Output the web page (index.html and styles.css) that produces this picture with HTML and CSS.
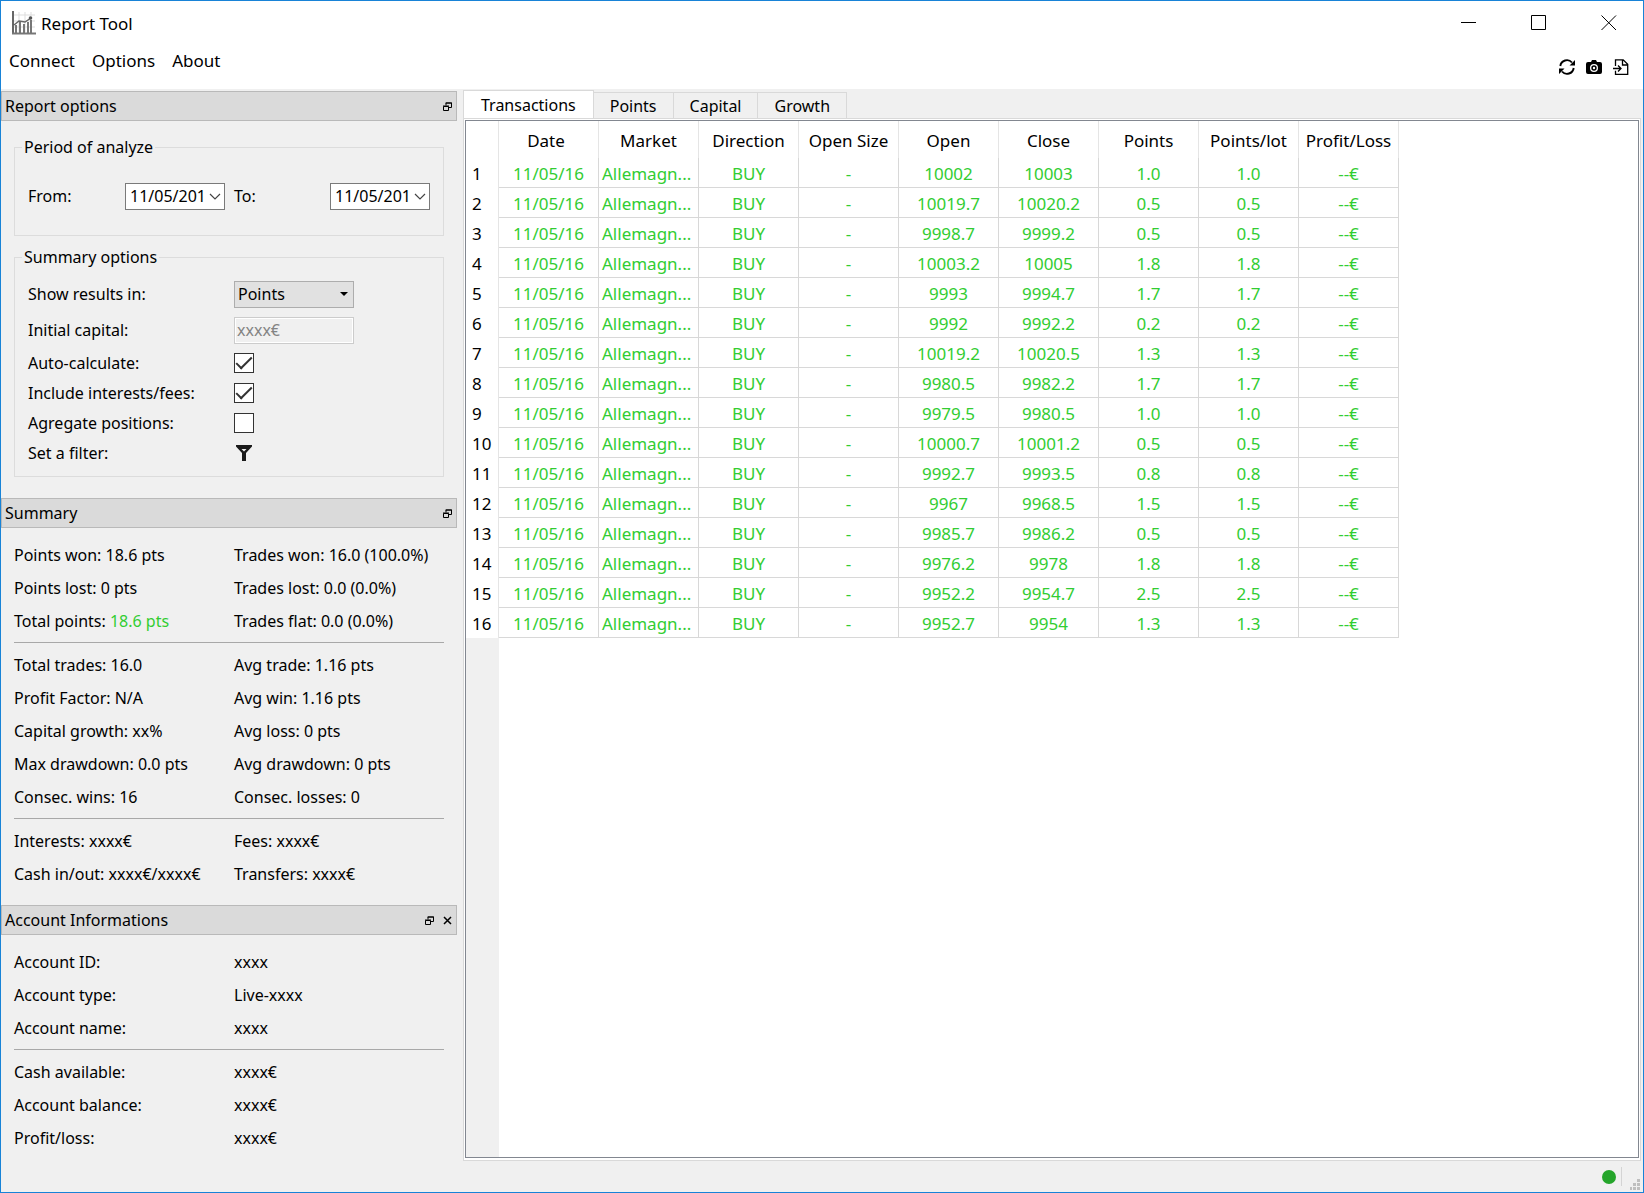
FILE: index.html
```html
<!DOCTYPE html>
<html lang="en">
<head>
<meta charset="utf-8">
<title>Report Tool</title>
<link rel="stylesheet" href="styles.css">
</head>
<body>
<svg class="sprite" aria-hidden="true">
  <symbol id="float" viewBox="0 0 9 9"><path d="M3 3.500V1h5.500v4.500H6M2.500 1h6.500M.5 4.500h5v4h-5zM0 4h6" fill="none" stroke="#000"/></symbol>
  <symbol id="chevron" viewBox="0 0 12 7"><path d="M1 1l5 5 5-5" fill="none" stroke="#444" stroke-width="1.200"/></symbol>
</svg>
<div class="window">
  <header class="top">
    <div class="titlebar">
      <svg class="logo" viewBox="0 0 24 24">
        <path d="M7 1v20M13 1v20M19 1v20M2 4h21M2 10h21M2 16h21" stroke="#ddd" fill="none"/>
        <path d="M4 22v-8M8 22V11M12 22v-9M16 22V11M19 22V9" stroke="#777" stroke-width="2"/>
        <path d="M2 14l5-4 6 1 6-4" stroke="#666" stroke-width="1.500" fill="none"/><circle cx="18.500" cy="7" r="1.800" fill="#555"/>
        <path d="M1 0v22" stroke="#333" stroke-width="1.500"/><path d="M0 22.500h24" stroke="#777" stroke-width="2"/>
      </svg>
      <h1>Report Tool</h1>
      <div class="winbuttons">
        <button aria-label="Minimize"><svg viewBox="0 0 16 16"><path d="M0 7.500h15" stroke="#000"/></svg></button>
        <button aria-label="Maximize"><svg viewBox="0 0 16 16"><path d="M.5.5h14v14H.5z" fill="none" stroke="#000"/></svg></button>
        <button aria-label="Close"><svg viewBox="0 0 16 16"><path d="M.5.5l14.500 14.500M15 .5L.5 15" stroke="#000"/></svg></button>
      </div>
    </div>
    <div class="menurow">
      <nav class="menu"><button>Connect</button><button>Options</button><button>About</button></nav>
      <div class="tools">
        <button aria-label="Refresh"><svg viewBox="0 0 16 16"><path d="M1.300 7A6.700 6.700 0 0 1 13 3.500M14.700 9A6.700 6.700 0 0 1 3 12.500" fill="none" stroke="#000" stroke-width="1.900"/><path d="M16 1v5.500h-5.500zM0 15V9.500h5.500z"/></svg></button>
        <button aria-label="Screenshot"><svg viewBox="0 0 16 16"><path fill-rule="evenodd" d="M2 3h3l1-2h4l1 2h3a2 2 0 0 1 2 2v8a2 2 0 0 1-2 2H2a2 2 0 0 1-2-2V5a2 2 0 0 1 2-2zM8 5a4 4 0 1 0 0 8 4 4 0 0 0 0-8z"/><circle cx="8" cy="9" r="2.700"/><circle cx="8" cy="9" r="1.200" fill="#fff"/></svg></button>
        <button aria-label="Export"><svg viewBox="0 0 16 16"><path d="M2.500 7V.8h7.700l4.500 4.500v10H2.500v-3.500M9.500 1v5h5M0 9.500h7.500M5 6.500l3 3-3 3" fill="none" stroke="#000" stroke-width="1.300"/></svg></button>
      </div>
    </div>
  </header>

  <div class="main">
    <aside class="docks">
      <section class="dock">
        <div class="dock-title"><h2>Report options</h2><button aria-label="Float"><svg><use href="#float"/></svg></button></div>
        <div class="options">
          <fieldset class="period">
            <legend>Period of analyze</legend>
            <label for="from">From:</label>
            <span class="date"><input id="from" type="text" value="11/05/201"><svg><use href="#chevron"/></svg></span>
            <label for="to">To:</label>
            <span class="date"><input id="to" type="text" value="11/05/201"><svg><use href="#chevron"/></svg></span>
          </fieldset>
          <fieldset class="summary-options">
            <legend>Summary options</legend>
            <div class="field tall"><label for="unit">Show results in:</label><span class="combo"><select id="unit"><option>Points</option><option>Percent</option></select><svg viewBox="0 0 8 4"><path d="M0 0h8L4 4z"/></svg></span></div>
            <div class="field tall"><label for="capital">Initial capital:</label><input id="capital" class="capital" type="text" value="xxxx€" disabled></div>
            <div class="field"><label for="auto">Auto-calculate:</label><input id="auto" type="checkbox" checked></div>
            <div class="field"><label for="fees">Include interests/fees:</label><input id="fees" type="checkbox" checked></div>
            <div class="field"><label for="agg">Agregate positions:</label><input id="agg" type="checkbox"></div>
            <div class="field"><label for="filter">Set a filter:</label><button id="filter" class="filter"><svg viewBox="0 0 16 16"><path fill-rule="evenodd" d="M0 0h16v1.500L10 8v8H6V8L0 1.500zM5.500 4L8 6.500 10.500 4z" fill="#1a1a1a"/></svg></button></div>
          </fieldset>
        </div>
      </section>

      <section class="dock">
        <div class="dock-title"><h2>Summary</h2><button aria-label="Float"><svg><use href="#float"/></svg></button></div>
        <div class="info">
          <div class="pairs">
            <span>Points won: 18.6 pts</span><span>Trades won: 16.0 (100.0%)</span>
            <span>Points lost: 0 pts</span><span>Trades lost: 0.0 (0.0%)</span>
            <span>Total points: <b>18.6 pts</b></span><span>Trades flat: 0.0 (0.0%)</span>
          </div>
          <hr>
          <div class="pairs">
            <span>Total trades: 16.0</span><span>Avg trade: 1.16 pts</span>
            <span>Profit Factor: N/A</span><span>Avg win: 1.16 pts</span>
            <span>Capital growth: xx%</span><span>Avg loss: 0 pts</span>
            <span>Max drawdown: 0.0 pts</span><span>Avg drawdown: 0 pts</span>
            <span>Consec. wins: 16</span><span>Consec. losses: 0</span>
          </div>
          <hr>
          <div class="pairs">
            <span>Interests: xxxx€</span><span>Fees: xxxx€</span>
            <span>Cash in/out: xxxx€/xxxx€</span><span>Transfers: xxxx€</span>
          </div>
        </div>
      </section>

      <section class="dock">
        <div class="dock-title"><h2>Account Informations</h2><button aria-label="Float"><svg><use href="#float"/></svg></button><button aria-label="Close"><svg viewBox="0 0 9 9"><path d="M1 1l7 7M8 1L1 8" stroke="#000" stroke-width="1.500"/></svg></button></div>
        <div class="info">
          <div class="pairs">
            <span>Account ID:</span><span>xxxx</span>
            <span>Account type:</span><span>Live-xxxx</span>
            <span>Account name:</span><span>xxxx</span>
          </div>
          <hr>
          <div class="pairs">
            <span>Cash available:</span><span>xxxx€</span>
            <span>Account balance:</span><span>xxxx€</span>
            <span>Profit/loss:</span><span>xxxx€</span>
          </div>
        </div>
      </section>
    </aside>

    <main class="content">
      <div class="tabs" role="tablist">
        <button role="tab" class="active" aria-selected="true">Transactions</button><button role="tab">Points</button><button role="tab">Capital</button><button role="tab">Growth</button>
      </div>
      <div class="pane">
        <div class="grid">
          <table>
            <colgroup><col class="num"><col span="9" class="data"></colgroup>
            <thead><tr><td></td><th>Date</th><th>Market</th><th>Direction</th><th>Open Size</th><th>Open</th><th>Close</th><th>Points</th><th>Points/lot</th><th>Profit/Loss</th></tr></thead>
            <tbody>
              <tr><th>1</th><td>11/05/16</td><td>Allemagn...</td><td>BUY</td><td>-</td><td>10002</td><td>10003</td><td>1.0</td><td>1.0</td><td>--€</td></tr>
              <tr><th>2</th><td>11/05/16</td><td>Allemagn...</td><td>BUY</td><td>-</td><td>10019.7</td><td>10020.2</td><td>0.5</td><td>0.5</td><td>--€</td></tr>
              <tr><th>3</th><td>11/05/16</td><td>Allemagn...</td><td>BUY</td><td>-</td><td>9998.7</td><td>9999.2</td><td>0.5</td><td>0.5</td><td>--€</td></tr>
              <tr><th>4</th><td>11/05/16</td><td>Allemagn...</td><td>BUY</td><td>-</td><td>10003.2</td><td>10005</td><td>1.8</td><td>1.8</td><td>--€</td></tr>
              <tr><th>5</th><td>11/05/16</td><td>Allemagn...</td><td>BUY</td><td>-</td><td>9993</td><td>9994.7</td><td>1.7</td><td>1.7</td><td>--€</td></tr>
              <tr><th>6</th><td>11/05/16</td><td>Allemagn...</td><td>BUY</td><td>-</td><td>9992</td><td>9992.2</td><td>0.2</td><td>0.2</td><td>--€</td></tr>
              <tr><th>7</th><td>11/05/16</td><td>Allemagn...</td><td>BUY</td><td>-</td><td>10019.2</td><td>10020.5</td><td>1.3</td><td>1.3</td><td>--€</td></tr>
              <tr><th>8</th><td>11/05/16</td><td>Allemagn...</td><td>BUY</td><td>-</td><td>9980.5</td><td>9982.2</td><td>1.7</td><td>1.7</td><td>--€</td></tr>
              <tr><th>9</th><td>11/05/16</td><td>Allemagn...</td><td>BUY</td><td>-</td><td>9979.5</td><td>9980.5</td><td>1.0</td><td>1.0</td><td>--€</td></tr>
              <tr><th>10</th><td>11/05/16</td><td>Allemagn...</td><td>BUY</td><td>-</td><td>10000.7</td><td>10001.2</td><td>0.5</td><td>0.5</td><td>--€</td></tr>
              <tr><th>11</th><td>11/05/16</td><td>Allemagn...</td><td>BUY</td><td>-</td><td>9992.7</td><td>9993.5</td><td>0.8</td><td>0.8</td><td>--€</td></tr>
              <tr><th>12</th><td>11/05/16</td><td>Allemagn...</td><td>BUY</td><td>-</td><td>9967</td><td>9968.5</td><td>1.5</td><td>1.5</td><td>--€</td></tr>
              <tr><th>13</th><td>11/05/16</td><td>Allemagn...</td><td>BUY</td><td>-</td><td>9985.7</td><td>9986.2</td><td>0.5</td><td>0.5</td><td>--€</td></tr>
              <tr><th>14</th><td>11/05/16</td><td>Allemagn...</td><td>BUY</td><td>-</td><td>9976.2</td><td>9978</td><td>1.8</td><td>1.8</td><td>--€</td></tr>
              <tr><th>15</th><td>11/05/16</td><td>Allemagn...</td><td>BUY</td><td>-</td><td>9952.2</td><td>9954.7</td><td>2.5</td><td>2.5</td><td>--€</td></tr>
              <tr><th>16</th><td>11/05/16</td><td>Allemagn...</td><td>BUY</td><td>-</td><td>9952.7</td><td>9954</td><td>1.3</td><td>1.3</td><td>--€</td></tr>
            </tbody>
          </table>
          <div class="gutter"></div>
        </div>
      </div>
    </main>
  </div>

  <footer class="status">
    <span class="led"></span><span class="sep"></span>
    <svg class="grip" viewBox="0 0 11 12"><path d="M7 0h3v3H7zM3 4h3v3H3zM7 4h3v3H7zM0 8h2v3H0zM3 8h3v3H3zM7 8h3v3H7z" fill="#bfbfbf"/></svg>
  </footer>
</div>
</body>
</html>
```
FILE: styles.css
```css
* { box-sizing: border-box; }
body { margin: 0; color: #000; font: 16px/24px "Noto Sans", sans-serif; }
button, input, select { font: inherit; color: inherit; }
button { margin: 0; padding: 0; border: 0; background: none; }
h1, h2 { margin: 0; font-size: inherit; font-weight: 400; }
svg { display: block; }
.sprite { position: absolute; width: 0; height: 0; }

.window { display: flex; flex-direction: column; min-height: 100vh; border: 1px solid #1883d7; background: #f0f0f0; }

.top { height: 88px; background: #fff; font-size: 17px; }
.titlebar { display: flex; align-items: center; height: 44px; padding-left: 11px; }
.titlebar h1 { padding-top: 2px; }
.logo { width: 24px; height: 24px; margin-right: 5px; }
.winbuttons { display: flex; gap: 54px; margin-left: auto; padding-right: 26px; }
.winbuttons svg { width: 16px; height: 16px; }
.menurow { display: flex; justify-content: space-between; padding: 4px 14px 0 8px; }
.menu { display: flex; gap: 17px; height: 24px; }
.tools { display: flex; gap: 11px; padding-top: 10px; }
.tools svg { width: 16px; height: 16px; }

.main { display: flex; flex: 1; }
.docks { flex: none; width: 456px; padding-top: 2px; }
.dock-title { display: flex; align-items: center; height: 30px; padding: 0 4px 0 3px; border: 1px solid #b9b9b9; background: #dadada; }
.dock-title h2 { flex: 1; }
.dock-title button + button { margin-left: 9px; }
.dock-title svg { width: 9px; height: 9px; }

.options { padding: 14px 13px 21px; }
fieldset { min-width: 0; margin: 0; padding: 0 13px; border: 1px solid #dcdcdc; }
legend { margin-left: -6px; padding: 0 2px; line-height: 24px; }
.period { display: grid; grid-template-columns: 97px 100px 105px 100px; align-items: center; height: 101px; padding-bottom: 2px; }
.period label[for="to"] { padding-left: 9px; }
.date { display: flex; align-items: center; width: 100px; height: 27px; border: 1px solid #7a7a7a; background: #fff; }
.date input { flex: 1; width: 0; height: 25px; padding: 0 0 0 4px; border: 0; background: none; outline: 0; }
.date svg { width: 12px; height: 7px; margin-right: 3px; }
.summary-options { height: 232px; margin-top: 9px; }
.field { display: grid; grid-template-columns: 206px 120px; align-items: center; height: 30px; }
.field.tall { height: 36px; }
.field.tall:nth-of-type(1) { margin-top: 7px; }
.combo { display: grid; align-items: center; }
.combo select { grid-area: 1 / 1; width: 120px; height: 27px; padding: 0 3px; border: 1px solid #adadad; border-radius: 0; background: #e1e1e1; appearance: none; }
.combo svg { grid-area: 1 / 1; justify-self: end; width: 8px; height: 4px; margin-right: 6px; pointer-events: none; }
.capital { width: 120px; height: 27px; padding: 0 2px; border: 1px solid #ccc; background: #f0f0f0; box-shadow: inset 0 0 0 1px #fff; color: #838383; }
.field input[type="checkbox"] { width: 20px; height: 20px; margin: 0; border: 1px solid #333; background: #fff; appearance: none; display: grid; place-items: center; }
.field input:checked::before { content: ""; width: 14px; height: 6px; margin-bottom: 5px; border: solid #333; border-width: 0 0 2px 2px; transform: rotate(-45deg); }
.filter { width: 20px; padding-left: 2px; }
.filter svg { width: 16px; height: 16px; }

.info { padding: 10px 13px 15px; }
.dock:last-child .info { padding-bottom: 0; }
.pairs { display: grid; grid-template-columns: 220px 1fr; grid-auto-rows: 33px; align-items: center; white-space: nowrap; }
.pairs b { font-weight: 400; color: #32cd32; }
hr { height: 1px; margin: 5px 0; border: 0; background: #a8a8a8; }

.content { display: flex; flex: 1; flex-direction: column; min-width: 0; padding: 1px 2px 0 6px; }
.tabs { display: flex; align-items: flex-end; height: 28px; }
.tabs button { height: 26px; padding: 0 16px; border: 1px solid #d9d9d9; border-width: 1px 1px 0 0; }
.tabs .active { height: 28px; padding: 0 17px; border-left-width: 1px; background: #fff; }
.pane { display: flex; flex: 1; padding: 1px 1px 2px; border: 1px solid #d9d9d9; background: #fff; }
.grid { display: flex; flex: 1; flex-direction: column; border: 1px solid #828790; overflow: hidden; }
table { width: 933px; table-layout: fixed; border-collapse: separate; border-spacing: 0; font-size: 17px; line-height: 24px; }
.num { width: 33px; }
.data { width: 100px; }
th, td { padding: 2px 0 0; font-weight: 400; text-align: center; }
thead th, thead td { height: 37px; border-right: 1px solid #e5e5e5; }
thead th:nth-child(2) { padding-right: 5px; }
tbody th { padding-left: 6px; text-align: left; border-right: 1px solid #e5e5e5; }
tbody td { height: 30px; border-right: 1px solid #d8d8d8; border-bottom: 1px solid #d8d8d8; color: #32cd32; }
tbody td:nth-child(3) { padding-left: 3px; text-align: left; }
.gutter { flex: 1; width: 33px; background: #f0f0f0; }

.status { display: flex; align-items: center; justify-content: flex-end; height: 31px; padding-right: 2px; }
.led { width: 14px; height: 14px; border-radius: 50%; background: #25a52b; }
.sep { width: 1px; height: 19px; margin: 0 8px 0 5px; background: #d4d4d4; }
.grip { width: 11px; height: 12px; align-self: flex-end; margin-bottom: 1px; }
```
